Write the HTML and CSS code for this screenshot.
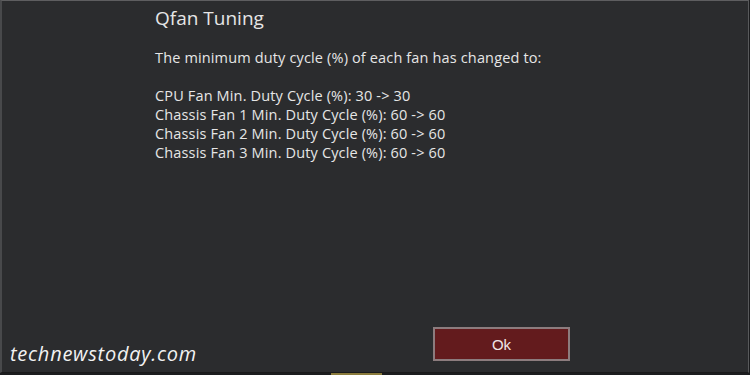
FILE: index.html
```html
<!DOCTYPE html>
<html lang="en">
<head>
  <meta charset="UTF-8">
  <meta name="viewport" content="width=device-width, initial-scale=1.0">
  <title>Qfan Tuning</title>
  <link rel="stylesheet" href="styles.css">
</head>
<body>

<div class="frame">
  <div class="content">
    <h2 class="title">Qfan Tuning</h2>
    <p class="message">The minimum duty cycle (%) of each fan has changed to:</p>
    <ul class="fan-list">
      <li>CPU Fan Min. Duty Cycle (%): 30 -&gt; 30</li>
      <li>Chassis Fan 1 Min. Duty Cycle (%): 60 -&gt; 60</li>
      <li>Chassis Fan 2 Min. Duty Cycle (%): 60 -&gt; 60</li>
      <li>Chassis Fan 3 Min. Duty Cycle (%): 60 -&gt; 60</li>
    </ul>
  </div>

  <div class="footer">
    <button class="btn">Ok</button>
  </div>

  <div class="watermark">technewstoday.com</div>
</div>

<div class="taskbar">
  <span class="task-item"></span>
</div>

</body>
</html>
```

FILE: styles.css
```css
body {
  margin: 0;
  width: 750px;
  height: 375px;
  overflow: hidden;
  background: #1c1d1f;
  font-family: "Open Sans", "Noto Sans", sans-serif;
  color: #e6e6e6;
}
.frame {
  position: relative;
  box-sizing: border-box;
  width: 749px;
  height: 373px;
  background: #2b2c2e;
  border-top: 1px solid #5e5e60;
  border-left: 2px solid #48494b;
  border-right: 1px solid #58595b;
  border-bottom: 1px solid #1a1a1b;
  display: flex;
  flex-direction: column;
}
.content {
  padding: 4px 0 0 153px;
}
.title {
  margin: 0 0 17px;
  font-size: 19px;
  font-weight: 400;
  line-height: 26px;
}
.message {
  margin: 0 0 19px;
  font-size: 14.5px;
  letter-spacing: 0.15px;
  line-height: 19px;
}
.fan-list {
  list-style: none;
  margin: 0;
  padding: 0;
  font-size: 14.5px;
  letter-spacing: 0.15px;
  line-height: 19px;
}
.footer {
  margin-top: auto;
  display: flex;
  justify-content: flex-end;
  padding: 0 178px 11px 0;
}
.btn {
  width: 137px;
  height: 34px;
  background: #631b1d;
  border: 2px solid #8c7c7e;
  color: #f0e6e6;
  font-family: "Liberation Sans", Arial, sans-serif;
  font-size: 15px;
  padding: 0;
}
.watermark {
  position: absolute;
  left: 8px;
  bottom: 5px;
  font-size: 20px;
  font-style: italic;
  letter-spacing: 0.75px;
  color: #f2f2f2;
}
.taskbar {
  height: 2px;
  position: relative;
}
.task-item {
  position: absolute;
  left: 331px;
  top: 0;
  width: 51px;
  height: 2px;
  background: #8a7b3c;
}
```
